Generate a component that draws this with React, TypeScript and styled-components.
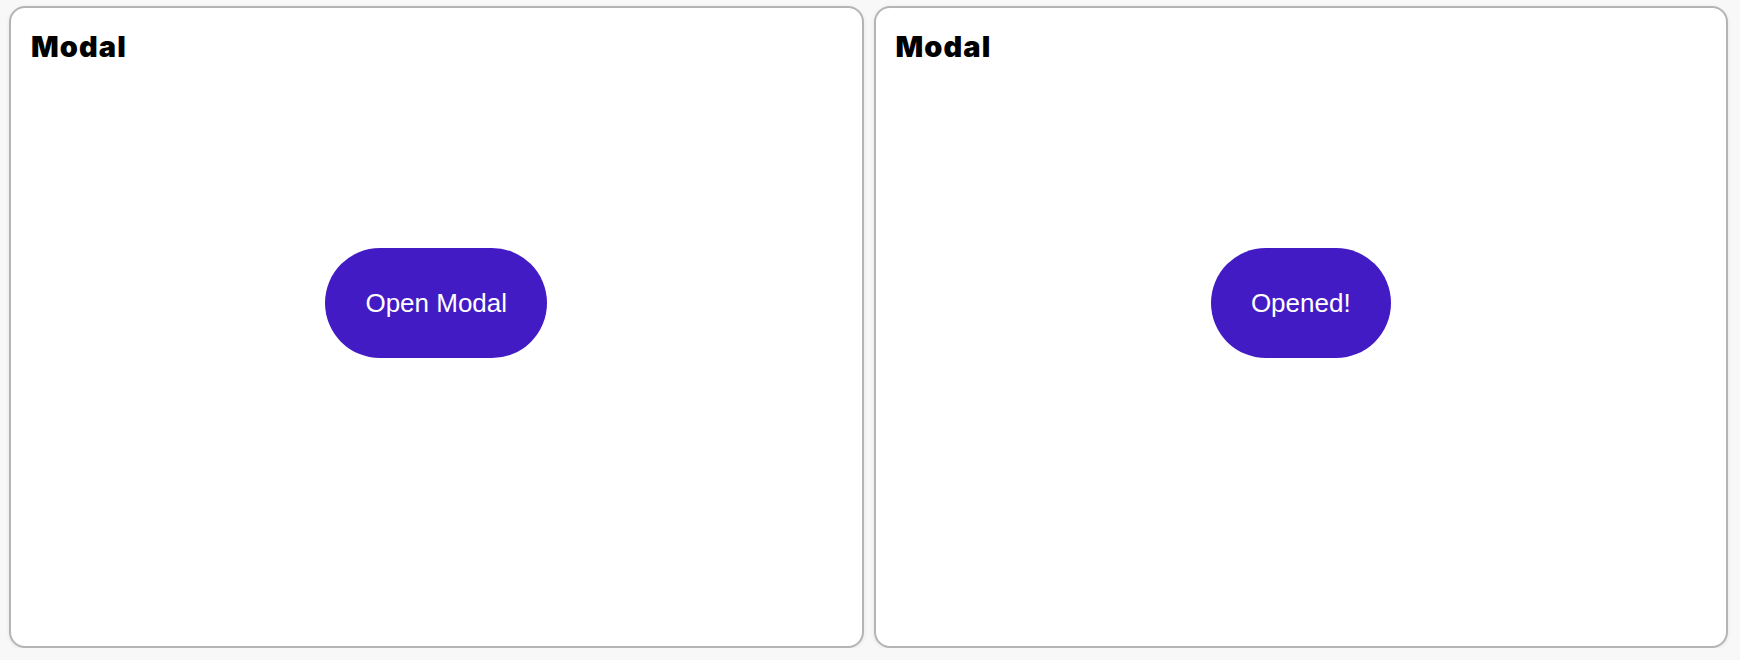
import React from "react";
import styled, { createGlobalStyle } from "styled-components";

const Global = createGlobalStyle`
  html, body {
    margin: 0;
    padding: 0;
    background: #f8f8f8;
  }
  body {
    font-family: "Liberation Sans", Arial, sans-serif;
  }
`;

const Page = styled.div`
  display: grid;
  grid-template-columns: 1fr 1fr;
  gap: 10px;
  padding: 6px 12px 0 9px;
`;

const Panel = styled.section`
  box-sizing: border-box;
  height: 642px;
  display: flex;
  flex-direction: column;
  background: #ffffff;
  border: 2px solid #b4b4b4;
  border-radius: 16px;
  box-shadow: 0 1px 4px rgba(0, 0, 0, 0.08);
  padding: 21px 20px 105px;
`;

const Title = styled.h2`
  margin: 0 0 1px;
  font-family: Inter, "Liberation Sans", sans-serif;
  font-weight: 900;
  font-size: 29px;
  line-height: 35px;
  letter-spacing: 1.1px;
  color: #000;
`;

const Stage = styled.div`
  flex: 1;
  display: flex;
  align-items: center;
  justify-content: center;
`;

const PillButton = styled.button`
  border: none;
  background: #431bc4;
  color: #ffffff;
  font-family: "Liberation Sans", Arial, sans-serif;
  font-size: 26px;
  line-height: 30px;
  padding: 40px;
  border-radius: 999px;
  cursor: pointer;
`;

export default function App() {
  return (
    <>
      <Global />
      <Page>
        <Panel>
          <Title>Modal</Title>
          <Stage>
            <PillButton>Open Modal</PillButton>
          </Stage>
        </Panel>
        <Panel>
          <Title>Modal</Title>
          <Stage>
            <PillButton>Opened!</PillButton>
          </Stage>
        </Panel>
      </Page>
    </>
  );
}
